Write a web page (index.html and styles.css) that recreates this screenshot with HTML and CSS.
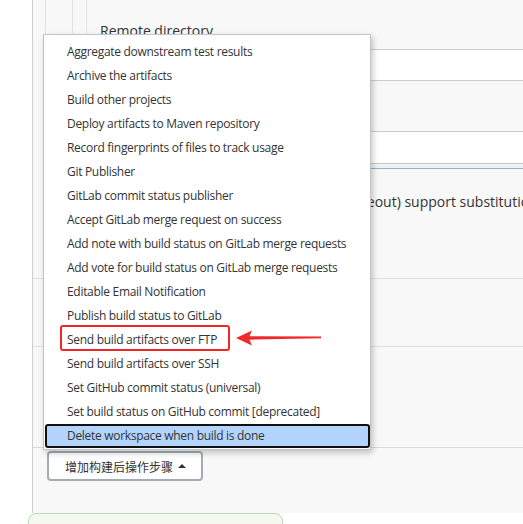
FILE: index.html
```html
<!DOCTYPE html>
<html>
<head>
<meta charset="utf-8">
<link rel="stylesheet" href="styles.css">
</head>
<body>
<div class="page">
  <div class="gutter"></div>
  <div class="main">
    <div class="nest1">
      <div class="nest2">
        <div class="nest3">
          <div class="label">Remote directory</div>
          <div class="input"></div>
          <div class="label-gap"></div>
          <div class="input input-last"></div>
          <div class="scrollband"></div>
        </div>
      </div>
    </div>
    <div class="check-row">use the variables in the build (timeout) support substitution</div>
    <div class="section s1"></div>
    <div class="section s2"></div>
    <div class="section s3"></div>
    <div class="btn-row">
      <button class="add-btn">增加构建后操作步骤<span class="caret"></span></button>
    </div>
  </div>
</div>
<div class="footer-box"></div>

<ul class="menu">
  <li class="item">Aggregate downstream test results</li>
  <li class="item">Archive the artifacts</li>
  <li class="item">Build other projects</li>
  <li class="item">Deploy artifacts to Maven repository</li>
  <li class="item">Record fingerprints of files to track usage</li>
  <li class="item">Git Publisher</li>
  <li class="item">GitLab commit status publisher</li>
  <li class="item">Accept GitLab merge request on success</li>
  <li class="item">Add note with build status on GitLab merge requests</li>
  <li class="item">Add vote for build status on GitLab merge requests</li>
  <li class="item">Editable Email Notification</li>
  <li class="item">Publish build status to GitLab</li>
  <li class="item">Send build artifacts over FTP</li>
  <li class="item">Send build artifacts over SSH</li>
  <li class="item">Set GitHub commit status (universal)</li>
  <li class="item">Set build status on GitHub commit [deprecated]</li>
  <li class="item active">Delete workspace when build is done</li>
</ul>

<div class="mark-box"></div>
<svg class="mark-arrow" width="90" height="18" viewBox="0 0 90 18">
  <polygon points="1,9 17,1.5 14.5,7.3 86,7.6 86,9.2 14.5,10.7 17,16.5" fill="#f02828"/>
</svg>
</body>
</html>
```

FILE: styles.css
```css
html, body {
  margin: 0;
  padding: 0;
}
body {
  width: 523px;
  height: 524px;
  overflow: hidden;
  background: #ffffff;
  font-family: "Open Sans", "Noto Sans", "Noto Sans CJK SC", sans-serif;
  color: #333;
  position: relative;
}
.page {
  display: flex;
  width: 640px;
  height: 513px;
}
.gutter {
  width: 32px;
  flex: none;
  background: #fff;
}
.main {
  flex: 1;
  border-left: 1px solid #cfcfcf;
  background: #f8f8f8;
  display: flex;
  flex-direction: column;
  min-width: 0;
}
.nest1 {
  margin-left: 12px;
  border-left: 1px solid #e2e2e2;
}
.nest2 {
  margin-left: 26px;
  border-left: 1px solid #e2e2e2;
}
.nest3 {
  margin-left: 13px;
  border-left: 1px solid #e2e2e2;
  padding-left: 13px;
  padding-top: 21px;
}
.label {
  font-size: 14px;
  line-height: 20px;
  height: 20px;
}
.input {
  margin-top: 8px;
  height: 30px;
  background: #fff;
  border-top: 1px solid #cdcdcd;
  border-bottom: 1px solid #cdcdcd;
}
.label-gap {
  height: 50px;
}
.input-last {
  margin-top: 0;
  height: 31px;
  border-bottom: none;
}
.scrollband {
  height: 4px;
  background: #eef2f5;
  border-top: 1px solid #c8c8c8;
  border-bottom: 1px solid #9fb0bf;
}
.check-row {
  margin-top: 23px;
  padding-left: 117px;
  font-size: 14px;
  line-height: 20px;
  white-space: nowrap;
  color: #333;
}
.section {
  border-top: 1px solid #e0e0e0;
}
.s1 { margin-top: 66px; height: 67px; }
.s2 { height: 100px; }
.s3 { height: 3px; border-top-color: #dadada; }
.btn-row {
  padding-left: 14px;
}
.add-btn {
  width: 156px;
  height: 30px;
  border: 2px solid #a3acb5;
  border-radius: 4px;
  background: #fff;
  padding: 0 0 0 16px;
  text-align: left;
  font-family: "Noto Sans CJK SC", sans-serif;
  font-size: 12px;
  color: #333;
  display: flex;
  align-items: center;
}
.caret {
  display: inline-block;
  margin-left: 5px;
  width: 0;
  height: 0;
  border-left: 4px solid transparent;
  border-right: 4px solid transparent;
  border-bottom: 4px solid #333;
}
.footer-box {
  margin-left: 28px;
  width: 253px;
  height: 20px;
  border: 1px solid #bcd8bc;
  border-radius: 8px 8px 0 0;
  background: #f5f8ef;
}
.menu {
  position: absolute;
  left: 43px;
  top: 34px;
  width: 326px;
  margin: 0;
  padding: 5px 0 1px 0;
  list-style: none;
  background: #fff;
  border: 1px solid #c4c4c4;
  box-shadow: 2px 3px 6px rgba(0, 0, 0, 0.22);
}
.item {
  height: 20px;
  line-height: 20px;
  margin-left: 1px;
  padding-left: 20px;
  border: 2px solid transparent;
  border-radius: 3px;
  font-size: 12px;
  letter-spacing: -0.3px;
  color: #333;
  white-space: nowrap;
}
.item.active {
  background: #b3d4fc;
  border-color: #111;
}
.mark-box {
  position: absolute;
  left: 60px;
  top: 325px;
  width: 166px;
  height: 22px;
  border: 2.5px solid #f02828;
  border-radius: 3px;
}
.mark-arrow {
  position: absolute;
  left: 235px;
  top: 329px;
}
```
